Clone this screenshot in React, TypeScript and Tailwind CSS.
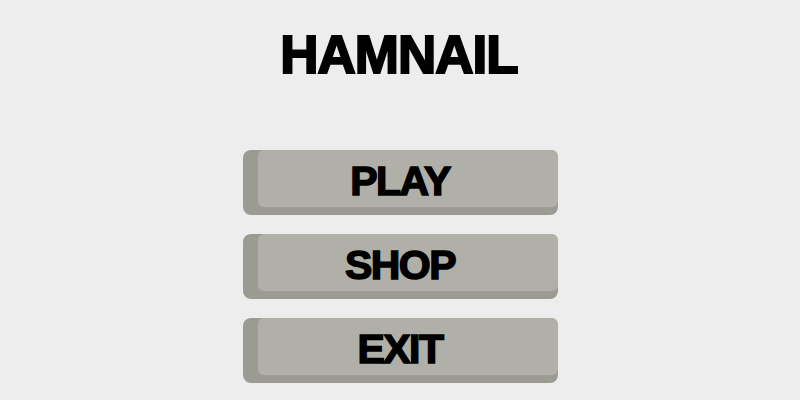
const items = ['PLAY', 'SHOP', 'EXIT']

function MenuButton({ label }: { label: string }) {
    return (
        <button className="flex h-[65px] w-[315px] rounded-[8px] bg-[#9c9b93] pb-[8px] pl-[15px]">
            <span className="flex h-full flex-1 items-center justify-center rounded-[6px] bg-[#b1b0a8] pt-[5px] pr-[15px] text-[41px] leading-none font-bold tracking-[-1.5px] text-black [-webkit-text-stroke:1.5px_#000]">
                {label}
            </span>
        </button>
    )
}

export default function App() {
    return (
        <div className="flex h-[400px] w-[800px] flex-col items-center bg-[#ededed] pt-[28px] font-['Liberation_Sans',Arial,sans-serif]">
            <h1 className="pr-[2px] text-[53px] leading-none font-bold tracking-[-1px] text-black [-webkit-text-stroke:2px_#000]">
                HAMNAIL
            </h1>
            <div className="mt-[69px] flex flex-col gap-[19px]">
                {items.map((item) => (
                    <MenuButton key={item} label={item} />
                ))}
            </div>
        </div>
    )
}
